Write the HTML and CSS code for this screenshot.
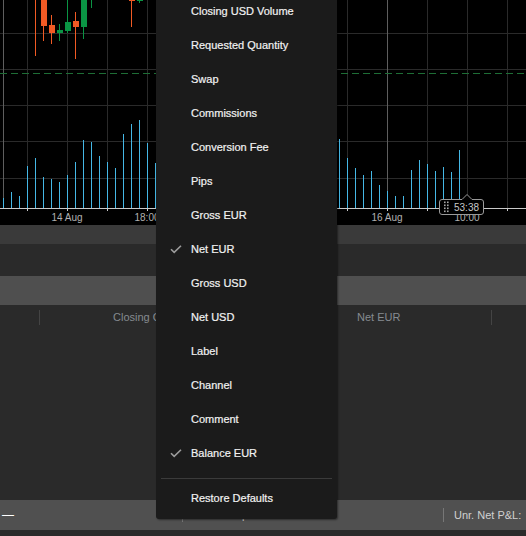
FILE: index.html
```html
<!DOCTYPE html>
<html>
<head>
<meta charset="utf-8">
<link rel="stylesheet" href="styles.css">
</head>
<body>
<div class="app">
  <div class="chart">
    <svg width="526" height="225" viewBox="0 0 526 225" xmlns="http://www.w3.org/2000/svg">
      <rect x="0" y="0" width="526" height="225" fill="#000"/>
      <g stroke="#2a2a2a" stroke-width="1">
        <line x1="27.5" y1="0" x2="27.5" y2="208"/>
        <line x1="67.5" y1="0" x2="67.5" y2="208"/>
        <line x1="107.5" y1="0" x2="107.5" y2="208"/>
        <line x1="147.5" y1="0" x2="147.5" y2="208"/>
        <line x1="187.5" y1="0" x2="187.5" y2="208"/>
        <line x1="227.5" y1="0" x2="227.5" y2="208"/>
        <line x1="267.5" y1="0" x2="267.5" y2="208"/>
        <line x1="307.5" y1="0" x2="307.5" y2="208"/>
        <line x1="347.5" y1="0" x2="347.5" y2="208"/>
        <line x1="427.5" y1="0" x2="427.5" y2="208"/>
        <line x1="467.5" y1="0" x2="467.5" y2="208"/>
        <line x1="507.5" y1="0" x2="507.5" y2="208"/>
        <line x1="0" y1="33.5" x2="526" y2="33.5"/>
        <line x1="0" y1="69.5" x2="526" y2="69.5"/>
        <line x1="0" y1="105.5" x2="526" y2="105.5"/>
        <line x1="0" y1="141.5" x2="526" y2="141.5"/>
        <line x1="0" y1="178.5" x2="526" y2="178.5"/>
      </g>
      <g stroke="#5e5e5e" stroke-width="1">
        <line x1="3.5" y1="0" x2="3.5" y2="208"/>
        <line x1="387.5" y1="0" x2="387.5" y2="208"/>
      </g>
      <line x1="0" y1="73.5" x2="526" y2="73.5" stroke="#1e6e36" stroke-width="1" stroke-dasharray="7 4"/>
      <g fill="#f15a24">
        <rect x="35" y="0" width="1" height="56"/>
        <rect x="43" y="0" width="1" height="41"/>
        <rect x="41" y="0" width="6" height="26"/>
        <rect x="51" y="15" width="1" height="29"/>
        <rect x="49" y="25" width="6" height="8"/>
        <rect x="75" y="12" width="1" height="47"/>
        <rect x="73" y="21" width="6" height="6"/>
        <rect x="131" y="0" width="1" height="27"/>
        <rect x="129" y="0" width="6" height="1"/>
      </g>
      <g fill="#0a9444">
        <rect x="59" y="24" width="1" height="17"/>
        <rect x="57" y="30" width="6" height="3"/>
        <rect x="67" y="0" width="1" height="33"/>
        <rect x="65" y="22" width="6" height="9"/>
        <rect x="83" y="0" width="1" height="39"/>
        <rect x="81" y="0" width="6" height="27"/>
        <rect x="91" y="0" width="1" height="8"/>
        <rect x="139" y="0" width="1" height="3"/>
        <rect x="137" y="0" width="6" height="1"/>
      </g>
      <g fill="#45b8e6">
        <rect x="3" y="198" width="1" height="10"/>
        <rect x="11" y="192" width="1" height="16"/>
        <rect x="19" y="196" width="1" height="12"/>
        <rect x="27" y="166" width="1" height="42"/>
        <rect x="35" y="158" width="1" height="50"/>
        <rect x="43" y="177" width="1" height="31"/>
        <rect x="51" y="179" width="1" height="29"/>
        <rect x="59" y="182" width="1" height="26"/>
        <rect x="67" y="175" width="1" height="33"/>
        <rect x="75" y="162" width="1" height="46"/>
        <rect x="83" y="140" width="1" height="68"/>
        <rect x="91" y="142" width="1" height="66"/>
        <rect x="99" y="156" width="1" height="52"/>
        <rect x="107" y="162" width="1" height="46"/>
        <rect x="115" y="168" width="1" height="40"/>
        <rect x="123" y="134" width="1" height="74"/>
        <rect x="131" y="124" width="1" height="84"/>
        <rect x="139" y="120" width="1" height="88"/>
        <rect x="147" y="143" width="1" height="65"/>
        <rect x="155" y="163" width="1" height="45"/>
        <rect x="339" y="139" width="1" height="69"/>
        <rect x="347" y="158" width="1" height="50"/>
        <rect x="355" y="168" width="1" height="40"/>
        <rect x="363" y="175" width="1" height="33"/>
        <rect x="371" y="171" width="1" height="37"/>
        <rect x="379" y="185" width="1" height="23"/>
        <rect x="387" y="191" width="1" height="17"/>
        <rect x="395" y="196" width="1" height="12"/>
        <rect x="403" y="196" width="1" height="12"/>
        <rect x="411" y="170" width="1" height="38"/>
        <rect x="419" y="160" width="1" height="48"/>
        <rect x="427" y="164" width="1" height="44"/>
        <rect x="435" y="171" width="1" height="37"/>
        <rect x="443" y="167" width="1" height="41"/>
        <rect x="451" y="172" width="1" height="36"/>
        <rect x="459" y="150" width="1" height="58"/>
      </g>
      <line x1="0" y1="208.5" x2="526" y2="208.5" stroke="#c9c9c9" stroke-width="1"/>
      <g stroke="#c9c9c9" stroke-width="1">
        <line x1="27.5" y1="208" x2="27.5" y2="211"/>
        <line x1="67.5" y1="208" x2="67.5" y2="211"/>
        <line x1="107.5" y1="208" x2="107.5" y2="211"/>
        <line x1="147.5" y1="208" x2="147.5" y2="211"/>
        <line x1="347.5" y1="208" x2="347.5" y2="211"/>
        <line x1="387.5" y1="208" x2="387.5" y2="211"/>
        <line x1="427.5" y1="208" x2="427.5" y2="211"/>
        <line x1="467.5" y1="208" x2="467.5" y2="211"/>
        <line x1="507.5" y1="208" x2="507.5" y2="211"/>
      </g>
      <g class="axis-label" text-anchor="middle">
        <text x="67" y="221">14 Aug</text>
        <text x="147" y="221">18:00</text>
        <text x="387" y="221">16 Aug</text>
        <text x="467" y="221">10:00</text>
      </g>
      <path d="M442 199.5 H462 L467 194.5 L472 199.5 H481 Q483.5 199.5 483.5 202 V212 Q483.5 214.5 481 214.5 H442 Q439.5 214.5 439.5 212 V202 Q439.5 199.5 442 199.5 Z" fill="#000" stroke="#9a9a9a" stroke-width="1"/>
      <g fill="#a8a8a8">
        <rect x="444" y="201.5" width="1.6" height="1.6"/>
        <rect x="447" y="201.5" width="1.6" height="1.6"/>
        <rect x="444" y="204.5" width="1.6" height="1.6"/>
        <rect x="447" y="204.5" width="1.6" height="1.6"/>
        <rect x="444" y="207.5" width="1.6" height="1.6"/>
        <rect x="447" y="207.5" width="1.6" height="1.6"/>
        <rect x="444" y="210.5" width="1.6" height="1.6"/>
        <rect x="447" y="210.5" width="1.6" height="1.6"/>
      </g>
      <text class="tip-label" x="454" y="211">53:38</text>
    </svg>
  </div>
  <div class="band band-a"></div>
  <div class="band band-b"></div>
  <div class="band band-c"></div>
  <div class="table-head">
    <div class="th th-first"></div>
    <div class="th th-closing"><span>Closing Quantity</span></div>
    <div class="th th-net"><span>Net EUR</span></div>
    <div class="th th-last"></div>
  </div>
  <div class="table-body"></div>
  <div class="status">
    <div class="seg seg-a"><span class="dash">—</span></div>
    <div class="seg seg-b"><span class="sep"></span><span class="stat">Smart Stop-Out: 50.00%</span></div>
    <div class="seg seg-c"><span class="sep"></span><span class="stat">Unr. Net P&amp;L:</span></div>
  </div>
  <div class="footer"></div>
</div>

<div class="menu">
  <div class="item">Closing USD Volume</div>
  <div class="item">Requested Quantity</div>
  <div class="item">Swap</div>
  <div class="item">Commissions</div>
  <div class="item">Conversion Fee</div>
  <div class="item">Pips</div>
  <div class="item">Gross EUR</div>
  <div class="item checked"><svg class="check" width="12" height="9" viewBox="0 0 12 9"><path d="M1 4.2 L4.2 7.4 L11 0.8" fill="none" stroke="#9c9c9c" stroke-width="1.6"/></svg>Net EUR</div>
  <div class="item">Gross USD</div>
  <div class="item">Net USD</div>
  <div class="item">Label</div>
  <div class="item">Channel</div>
  <div class="item">Comment</div>
  <div class="item checked"><svg class="check" width="12" height="9" viewBox="0 0 12 9"><path d="M1 4.2 L4.2 7.4 L11 0.8" fill="none" stroke="#9c9c9c" stroke-width="1.6"/></svg>Balance EUR</div>
  <div class="menu-sep"></div>
  <div class="item restore">Restore Defaults</div>
</div>
</body>
</html>
```

FILE: styles.css
```css
* { box-sizing: border-box; }
html, body {
  margin: 0;
  padding: 0;
  background: #2a2a2a;
  width: 526px;
  height: 536px;
  overflow: hidden;
  font-family: "Liberation Sans", Arial, sans-serif;
}
.app {
  width: 526px;
  height: 536px;
  display: flex;
  flex-direction: column;
}
.chart {
  height: 225px;
  flex: none;
  background: #000;
}
.chart svg { display: block; }
.axis-label {
  font-family: "Liberation Sans", Arial, sans-serif;
  font-size: 10px;
  fill: #b0b0b0;
}
.tip-label {
  font-family: "Liberation Sans", Arial, sans-serif;
  font-size: 10px;
  fill: #c8c8c8;
}
.band { flex: none; }
.band-a { height: 19px; background: #3a3a3a; }
.band-b { height: 32px; background: #2a2a2a; }
.band-c { height: 29px; background: #4f4f4f; }
.table-head {
  flex: none;
  height: 24px;
  display: flex;
  align-items: center;
  background: #2a2a2a;
  font-size: 11px;
  color: #868b90;
}
.th {
  height: 15px;
  display: flex;
  align-items: center;
  white-space: nowrap;
}
.th-first { width: 40px; border-right: 1px solid #444; }
.th-closing { width: 230px; padding-left: 73px; }
.th-net { width: 222px; padding-left: 87px; border-right: 1px solid #444; }
.th-last { flex: 1; }
.table-body { flex: 1; background: #2a2a2a; }
.status {
  flex: none;
  height: 30px;
  background: #505050;
  display: flex;
  align-items: center;
  font-size: 11px;
  color: #d0d0d0;
}
.seg { display: flex; align-items: center; height: 100%; white-space: nowrap; }
.seg-a { width: 182px; padding-left: 2px; }
.seg-b { width: 261px; }
.seg-c { flex: 1; }
.dash { color: #fff; font-size: 12px; }
.sep {
  display: block;
  width: 1px;
  height: 14px;
  background: #777;
  margin-right: 10px;
}
.footer { flex: none; height: 6px; background: #2a2a2a; }

.menu {
  position: absolute;
  left: 156px;
  top: -6px;
  width: 181px;
  background: #1b1b1b;
  padding-bottom: 4px;
  border-radius: 0 0 3px 3px;
  box-shadow: 1px 1px 2px rgba(0, 0, 0, 0.45);
}
.item {
  position: relative;
  height: 34px;
  line-height: 34px;
  padding-left: 35px;
  font-size: 11px;
  color: #f2f2f2;
  white-space: nowrap;
  -webkit-text-stroke: 0.2px #f2f2f2;
}
.check {
  position: absolute;
  left: 14px;
  top: 13px;
}
.menu-sep {
  height: 1px;
  margin: 8px 5px 2px 5px;
  background: #3b3b3b;
}
```
